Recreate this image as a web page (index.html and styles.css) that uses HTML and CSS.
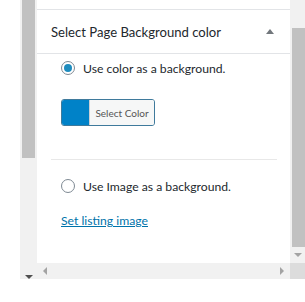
FILE: index.html
```html
<!DOCTYPE html>
<html lang="en">
<head>
    <meta charset="UTF-8">
    <title>Select Page Background color</title>
    <link rel="stylesheet" href="styles.css">
</head>
<body>
    <div class="frame">
        <div class="gutter"></div>
        <div class="outer-scroll">
            <div class="outer-thumb"></div>
            <span class="arrow-down"></span>
        </div>
        <div class="viewport">
            <div class="panel">
                <div class="prev-section"></div>
                <div class="panel-header">
                    <h2>Select Page Background color</h2>
                    <span class="toggle"></span>
                </div>
                <div class="panel-body">
                    <label class="option">
                        <span class="radio checked"></span>
                        Use color as a background.
                    </label>
                    <button class="color-result" type="button">
                        <span class="swatch"></span>
                        <span class="color-text">Select Color</span>
                    </button>
                    <hr class="divider">
                    <label class="option second">
                        <span class="radio"></span>
                        Use Image as a background.
                    </label>
                    <a href="#" class="image-link">Set listing image</a>
                </div>
            </div>
            <div class="v-scroll">
                <div class="v-thumb"></div>
                <span class="arrow-down small"></span>
            </div>
            <div class="h-scroll">
                <span class="arrow-left"></span>
                <span class="arrow-right"></span>
            </div>
            <div class="corner"></div>
        </div>
    </div>
</body>
</html>
```
FILE: styles.css
```css
* {
    margin: 0;
    padding: 0;
    box-sizing: border-box;
}

body {
    font-family: Lato, "Noto Sans", sans-serif;
    color: #23282d;
    background: #fff;
    width: 305px;
    height: 302px;
    overflow: hidden;
}

.frame {
    display: flex;
    height: 279px;
}

.gutter {
    width: 20px;
    background: #fff;
}

.outer-scroll {
    width: 17px;
    background: #f1f1f1;
    display: flex;
    flex-direction: column;
    align-items: center;
}

.outer-thumb {
    width: 13px;
    height: 158px;
    background: #c1c1c1;
}

.arrow-down {
    margin-top: auto;
    margin-bottom: 0;
    width: 0;
    height: 0;
    border-left: 4px solid transparent;
    border-right: 4px solid transparent;
    border-top: 4px solid #505050;
}

.viewport {
    flex: 1;
    display: grid;
    grid-template-columns: 253px 15px;
    grid-template-rows: 263px 16px;
}

.panel {
    background: #fff;
    overflow: hidden;
}

.prev-section {
    height: 10px;
    border-bottom: 1px solid #e2e4e7;
}

.panel-header {
    height: 44px;
    display: flex;
    align-items: center;
    padding: 0 14px;
    border-bottom: 1px solid #e2e4e7;
}

.panel-header h2 {
    flex: 1;
    font-size: 13.1px;
    font-weight: 400;
    color: #23282d;
}

.toggle {
    width: 0;
    height: 0;
    border-left: 4px solid transparent;
    border-right: 4px solid transparent;
    border-bottom: 5px solid #72777c;
    margin-right: 2px;
}

.panel-body {
    padding: 3px 13px 0 14px;
}

.option {
    display: flex;
    align-items: center;
    gap: 8px;
    font-size: 12.2px;
    padding-left: 10px;
    height: 22px;
}

.radio {
    width: 14px;
    height: 14px;
    border: 1px solid #7e8993;
    border-radius: 50%;
    display: flex;
    align-items: center;
    justify-content: center;
}

.radio.checked::after {
    content: "";
    width: 8px;
    height: 8px;
    border-radius: 50%;
    background: #1e8cbe;
}

.color-result {
    display: flex;
    margin: 20px 0 0 10px;
    width: 94px;
    height: 27px;
    border: 1px solid #3f7a9c;
    border-radius: 3px;
    overflow: hidden;
    background: #f7f7f7;
    font-family: inherit;
    cursor: pointer;
}

.swatch {
    width: 27px;
    background: #0082c8;
}

.color-text {
    flex: 1;
    display: flex;
    align-items: center;
    justify-content: center;
    font-size: 10px;
    color: #555;
    background: #f6f7f7;
    border-left: 1px solid #ccd0d4;
}

.divider {
    border: 0;
    border-top: 1px solid #e8e8e8;
    margin: 33px 0 0;
}

.option.second {
    margin-top: 15px;
}

.image-link {
    display: inline-block;
    margin: 16px 0 0 10px;
    font-size: 12.2px;
    color: #0073aa;
    text-decoration: underline;
}

.v-scroll {
    background: #f1f1f1;
    display: flex;
    flex-direction: column;
    align-items: flex-end;
}

.v-thumb {
    width: 13px;
    height: 219px;
    margin-top: 28px;
    background: #c1c1c1;
}

.arrow-down.small {
    align-self: center;
    margin-bottom: 6px;
    border-top-color: #a3a3a3;
}

.h-scroll {
    background: #f1f1f1;
    display: flex;
    align-items: center;
    justify-content: space-between;
    padding: 0 6px 0 6px;
}

.arrow-left {
    border-top: 4px solid transparent;
    border-bottom: 4px solid transparent;
    border-right: 4px solid #a3a3a3;
}

.arrow-right {
    border-top: 4px solid transparent;
    border-bottom: 4px solid transparent;
    border-left: 4px solid #a3a3a3;
}

.corner {
    background: #dcdcdc;
}
```
